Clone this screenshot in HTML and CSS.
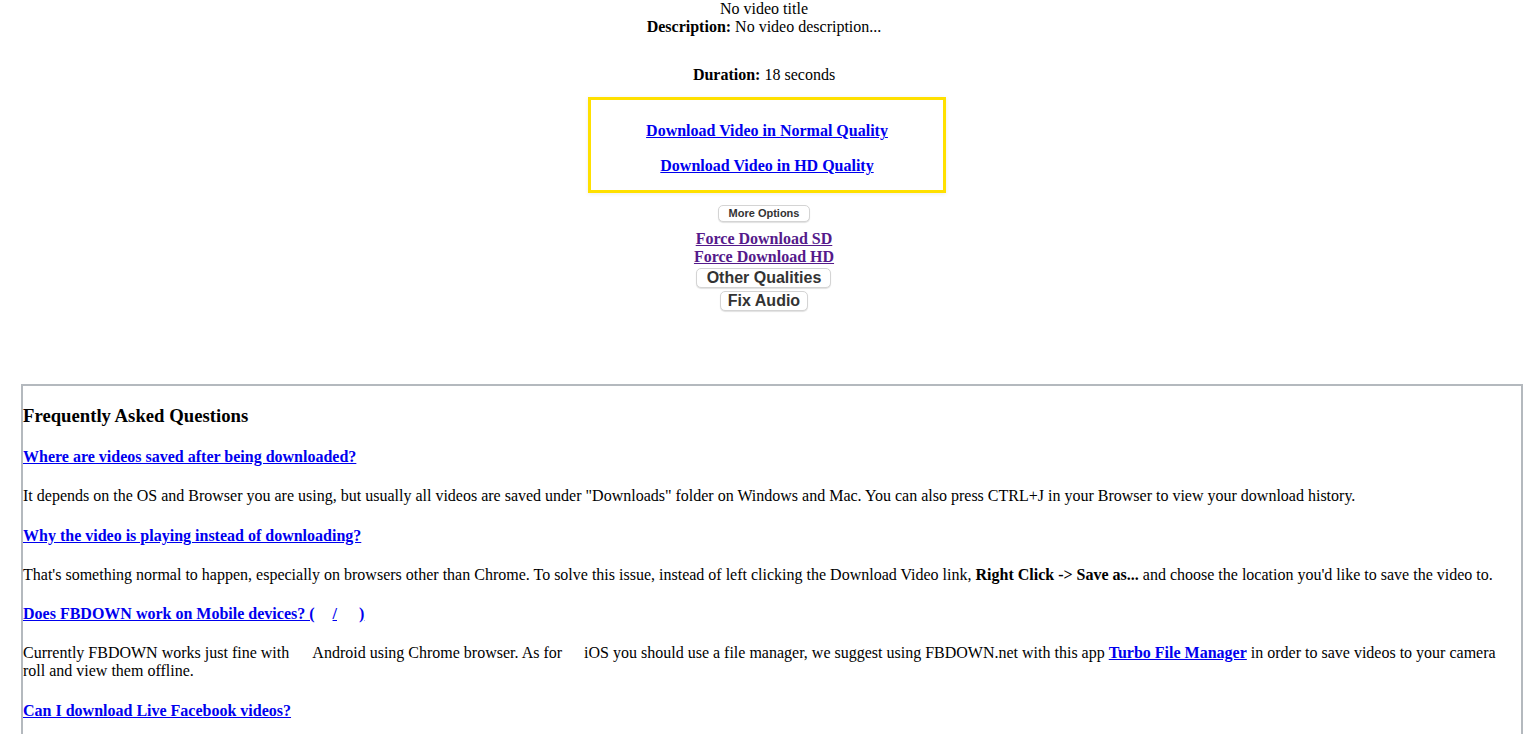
FILE: index.html
```html
<!DOCTYPE html>
<html>
<head>
<meta charset="utf-8">
<link rel="stylesheet" href="styles.css">
</head>
<body>
<div class="result">
  <div class="line">No video title</div>
  <div class="line"><b>Description:</b> No video description...</div>
  <div class="line duration"><b>Duration:</b> 18 seconds</div>
  <div class="dlbox">
    <a class="dl" href="#">Download Video in Normal Quality</a>
    <a class="dl" href="#">Download Video in HD Quality</a>
  </div>
  <button class="btn small">More Options</button>
  <div class="options">
    <a class="force" href="#">Force Download SD</a>
    <a class="force" href="#">Force Download HD</a>
    <button class="btn big">Other Qualities</button>
    <button class="btn big fix">Fix Audio</button>
  </div>
</div>

<div class="faq">
  <h3>Frequently Asked Questions</h3>
  <h4><a href="#">Where are videos saved after being downloaded?</a></h4>
  <p>It depends on the OS and Browser you are using, but usually all videos are saved under "Downloads" folder on Windows and Mac. You can also press CTRL+J in your Browser to view your download history.</p>
  <h4><a href="#">Why the video is playing instead of downloading?</a></h4>
  <p>That's something normal to happen, especially on browsers other than Chrome. To solve this issue, instead of left clicking the Download Video link, <b>Right Click -&gt; Save as...</b> and choose the location you'd like to save the video to.</p>
  <h4><a href="#">Does FBDOWN work on Mobile devices? (<span class="img w18"></span>/<span class="img w22"></span>)</a></h4>
  <p>Currently FBDOWN works just fine with <span class="img w16"></span> Android using Chrome browser. As for <span class="img w14"></span> iOS you should use a file manager, we suggest using FBDOWN.net with this app <a class="bold" href="#">Turbo File Manager</a> in order to save videos to your camera roll and view them offline.</p>
  <h4><a href="#">Can I download Live Facebook videos?</a></h4>
  <p>Yes, but please note that you have to wait until the live stream is finished and then you can download the video.</p>
</div>
</body>
</html>
```

FILE: styles.css
```css
html, body {
  margin: 0;
  padding: 0;
  background: #ffffff;
}

body {
  font-family: "Liberation Serif", "Times New Roman", serif;
  font-size: 16px;
  line-height: 18px;
  color: #000000;
}

a {
  color: #0000ee;
  text-decoration: underline;
}

.result {
  display: flex;
  flex-direction: column;
  align-items: center;
  padding-left: 2px;
}

.line {
  text-align: center;
}

.duration {
  margin-top: 30px;
}

.dlbox {
  box-sizing: border-box;
  width: 358px;
  height: 96px;
  margin-top: 13px;
  margin-left: 6px;
  border: 3px solid #ffe000;
  box-shadow: 0 1px 4px rgba(0, 0, 0, 0.08);
  display: flex;
  flex-direction: column;
  align-items: center;
  padding-top: 22px;
  gap: 17px;
}

.dl {
  font-weight: bold;
  display: block;
}

.btn {
  font-family: "Liberation Sans", Arial, sans-serif;
  font-weight: bold;
  color: #333333;
  background: #ffffff;
  border: 1px solid #d4d4d4;
  border-radius: 5px;
  box-shadow: 0 1px 1px rgba(0, 0, 0, 0.12);
  padding: 0;
  margin: 0;
  line-height: 1;
}

.btn.small {
  margin-top: 12px;
  width: 92px;
  height: 17px;
  font-size: 11px;
}

.options {
  margin-top: 8px;
  display: flex;
  flex-direction: column;
  align-items: center;
}

.force {
  color: #551a8b;
  font-weight: bold;
  display: block;
}

.btn.big {
  margin-top: 2px;
  width: 135px;
  height: 20px;
  font-size: 16px;
}

.btn.big.fix {
  margin-top: 3px;
  width: 88px;
}

.faq {
  margin: 73px 3px 0 21px;
  border: 2px solid #b4b9be;
  padding: 0;
}

.faq h3 {
  font-size: 18.72px;
  line-height: 22px;
  margin: 18.72px 0;
}

.faq h4 {
  font-size: 16px;
  line-height: 18px;
  margin: 21.28px 0;
}

.faq p {
  margin: 16px 0;
}

.bold {
  font-weight: bold;
}

.img {
  display: inline-block;
  height: 14px;
  vertical-align: baseline;
}

.w14 { width: 14px; }
.w16 { width: 16px; }
.w18 { width: 18px; }
.w22 { width: 22px; }
```
